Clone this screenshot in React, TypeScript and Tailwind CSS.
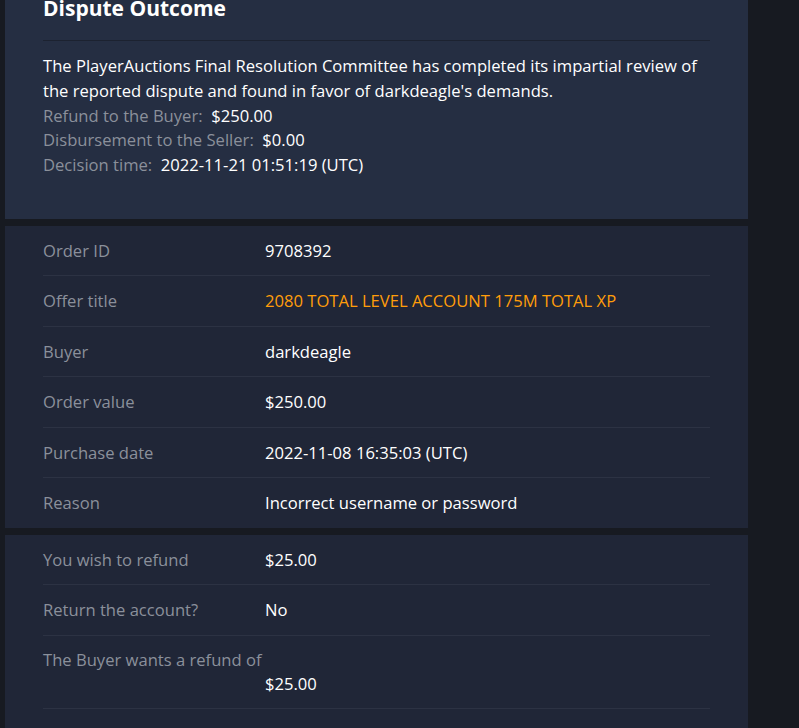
import React from 'react'

const font = { fontFamily: '"Open Sans", Lato, sans-serif' }

function Row({ label, value, orange, last }: { label: string; value: string; orange?: boolean; last?: boolean }) {
  return (
    <div className={`flex items-center py-3 ${last ? '' : 'border-b border-[#2c3243]'}`}>
      <div className="w-[222px] shrink-0 text-[#8b909b] text-[16.6px] leading-[25.5px]">{label}</div>
      <div className={`text-[16.6px] leading-[25.5px] ${orange ? 'text-[#ff9d0a]' : 'text-white'}`}>{value}</div>
    </div>
  )
}

export default function App() {
  return (
    <div className="h-[728px] overflow-hidden bg-[#171a21] pl-[5px]" style={font}>
      <div className="w-[743px] flex flex-col gap-[7px]">
        {/* outcome */}
        <div className="bg-[#252e42] px-[38px] pb-[41px]">
          <div className="w-[667px]">
            <h2 className="-mt-[7px] text-white font-bold text-[21px] leading-[30px] pb-[17px] border-b border-[#1c2230]">
              Dispute Outcome
            </h2>
            <div className="pt-[13px] text-[16.6px] leading-[24.75px]">
              <p className="text-white">
                The PlayerAuctions Final Resolution Committee has completed its impartial review of the reported dispute and found in favor of darkdeagle's demands.
              </p>
              <p className="text-[#8b909b]">Refund to the Buyer:&nbsp; <span className="text-white">$250.00</span></p>
              <p className="text-[#8b909b]">Disbursement to the Seller:&nbsp; <span className="text-white">$0.00</span></p>
              <p className="text-[#8b909b]">Decision time:&nbsp; <span className="text-white">2022-11-21 01:51:19 (UTC)</span></p>
            </div>
          </div>
        </div>

        {/* order details */}
        <div className="bg-[#202637] px-[38px]">
          <div className="w-[667px]">
            <Row label="Order ID" value="9708392" />
            <Row label="Offer title" value="2080 TOTAL LEVEL ACCOUNT 175M TOTAL XP" orange />
            <Row label="Buyer" value="darkdeagle" />
            <Row label="Order value" value="$250.00" />
            <Row label="Purchase date" value="2022-11-08 16:35:03 (UTC)" />
            <Row label="Reason" value="Incorrect username or password" last />
          </div>
        </div>

        {/* refund request */}
        <div className="bg-[#202637] px-[38px] pb-[40px]">
          <div className="w-[667px]">
            <Row label="You wish to refund" value="$25.00" />
            <Row label="Return the account?" value="No" />
            <div className="py-3 border-b border-[#2c3243] text-[16.6px] leading-[24px]">
              <div className="text-[#8b909b]">The Buyer wants a refund of</div>
              <div className="pl-[222px] text-white">$25.00</div>
            </div>
          </div>
        </div>
      </div>
    </div>
  )
}
